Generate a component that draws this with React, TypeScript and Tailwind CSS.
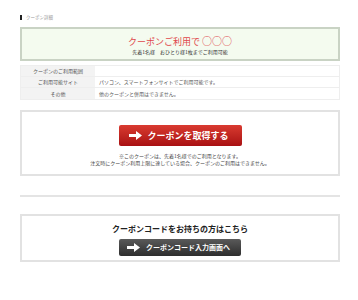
/**
 * クーポン詳細
 */

const jp = { fontFamily: '"Noto Sans CJK JP", "Noto Sans", sans-serif' };

function ArrowIcon() {
  return (
    <svg width="13" height="9" viewBox="0 0 13 9" className="shrink-0">
      <path d="M0 3h7V0l6 4.5L7 9V6H0z" fill="#fff" />
    </svg>
  );
}

const rows = [
  { label: 'クーポンのご利用範囲', value: '' },
  { label: 'ご利用可能サイト', value: 'パソコン、スマートフォンサイトでご利用可能です。' },
  { label: 'その他', value: '他のクーポンと併用はできません。' },
];

export default function App() {
  return (
    <div className="w-[358px] h-[300px] bg-white overflow-hidden" style={jp}>
      <div className="ml-[20px] w-[320px] pt-[15px]">
        {/* 見出し */}
        <div className="flex items-center gap-[4px] h-[5px]">
          <div className="w-[2px] h-[5px] bg-[#222]" />
          <span className="text-[4.5px] leading-none text-[#999]">クーポン詳細</span>
        </div>

        {/* クーポン概要 */}
        <div className="mt-[7px] h-[34px] border-[2px] border-[#c9d3c4] bg-[#f4fbef] flex flex-col items-center pt-[6px]">
          <div className="text-[9px] leading-[11px] text-[#e0474c]">
            クーポンご利用で <span className="text-[10px]">○○○</span>
          </div>
          <div className="text-[5px] leading-[7px] text-[#333] mt-[1px]">
            先着1名様　おひとり様1枚までご利用可能
          </div>
        </div>

        {/* 利用条件 */}
        <div className="mt-[4px] border border-[#eee]">
          {rows.map((r) => (
            <div key={r.label} className="flex h-[11px] border-b border-[#eee] last:border-b-0">
              <div className="w-[75px] bg-[#f3f3f3] border-r border-[#fff] flex items-center justify-center text-[5px] text-[#555]">
                {r.label}
              </div>
              <div className="flex-1 flex items-center pl-[3px] text-[5px] text-[#555]">{r.value}</div>
            </div>
          ))}
        </div>

        {/* 取得ボタン */}
        <div className="mt-[10px] h-[66px] border-[2px] border-[#e2e2e2] flex flex-col items-center pt-[13px]">
          <button className="w-[123px] h-[21px] rounded-[2px] bg-gradient-to-b from-[#d93a30] to-[#a90f12] flex items-center gap-[6px] pl-[10px] text-white text-[9px] font-bold">
            <ArrowIcon />
            <span>クーポンを取得する</span>
          </button>
          <div className="mt-[6px] text-[5px] leading-[7px] text-[#444] text-center">
            <p>※このクーポンは、先着1名様でのご利用となります。</p>
            <p>注文時にクーポン利用上限に達している場合、クーポンのご利用はできません。</p>
          </div>
        </div>

        <div className="mt-[19px] h-[2px] bg-[#e4e4e4]" />

        {/* クーポンコード */}
        <div className="mt-[17px] h-[48px] border-[2px] border-[#e2e2e2] flex flex-col items-center pt-[8px]">
          <div className="text-[8px] leading-[10px] font-bold text-[#222]">クーポンコードをお持ちの方はこちら</div>
          <button className="mt-[5px] w-[122px] h-[17px] rounded-[2px] bg-gradient-to-b from-[#5a5a5a] to-[#2e2e2e] flex items-center gap-[6px] pl-[8px] text-white text-[7px] font-bold">
            <ArrowIcon />
            <span>クーポンコード入力画面へ</span>
          </button>
        </div>
      </div>
    </div>
  );
}
